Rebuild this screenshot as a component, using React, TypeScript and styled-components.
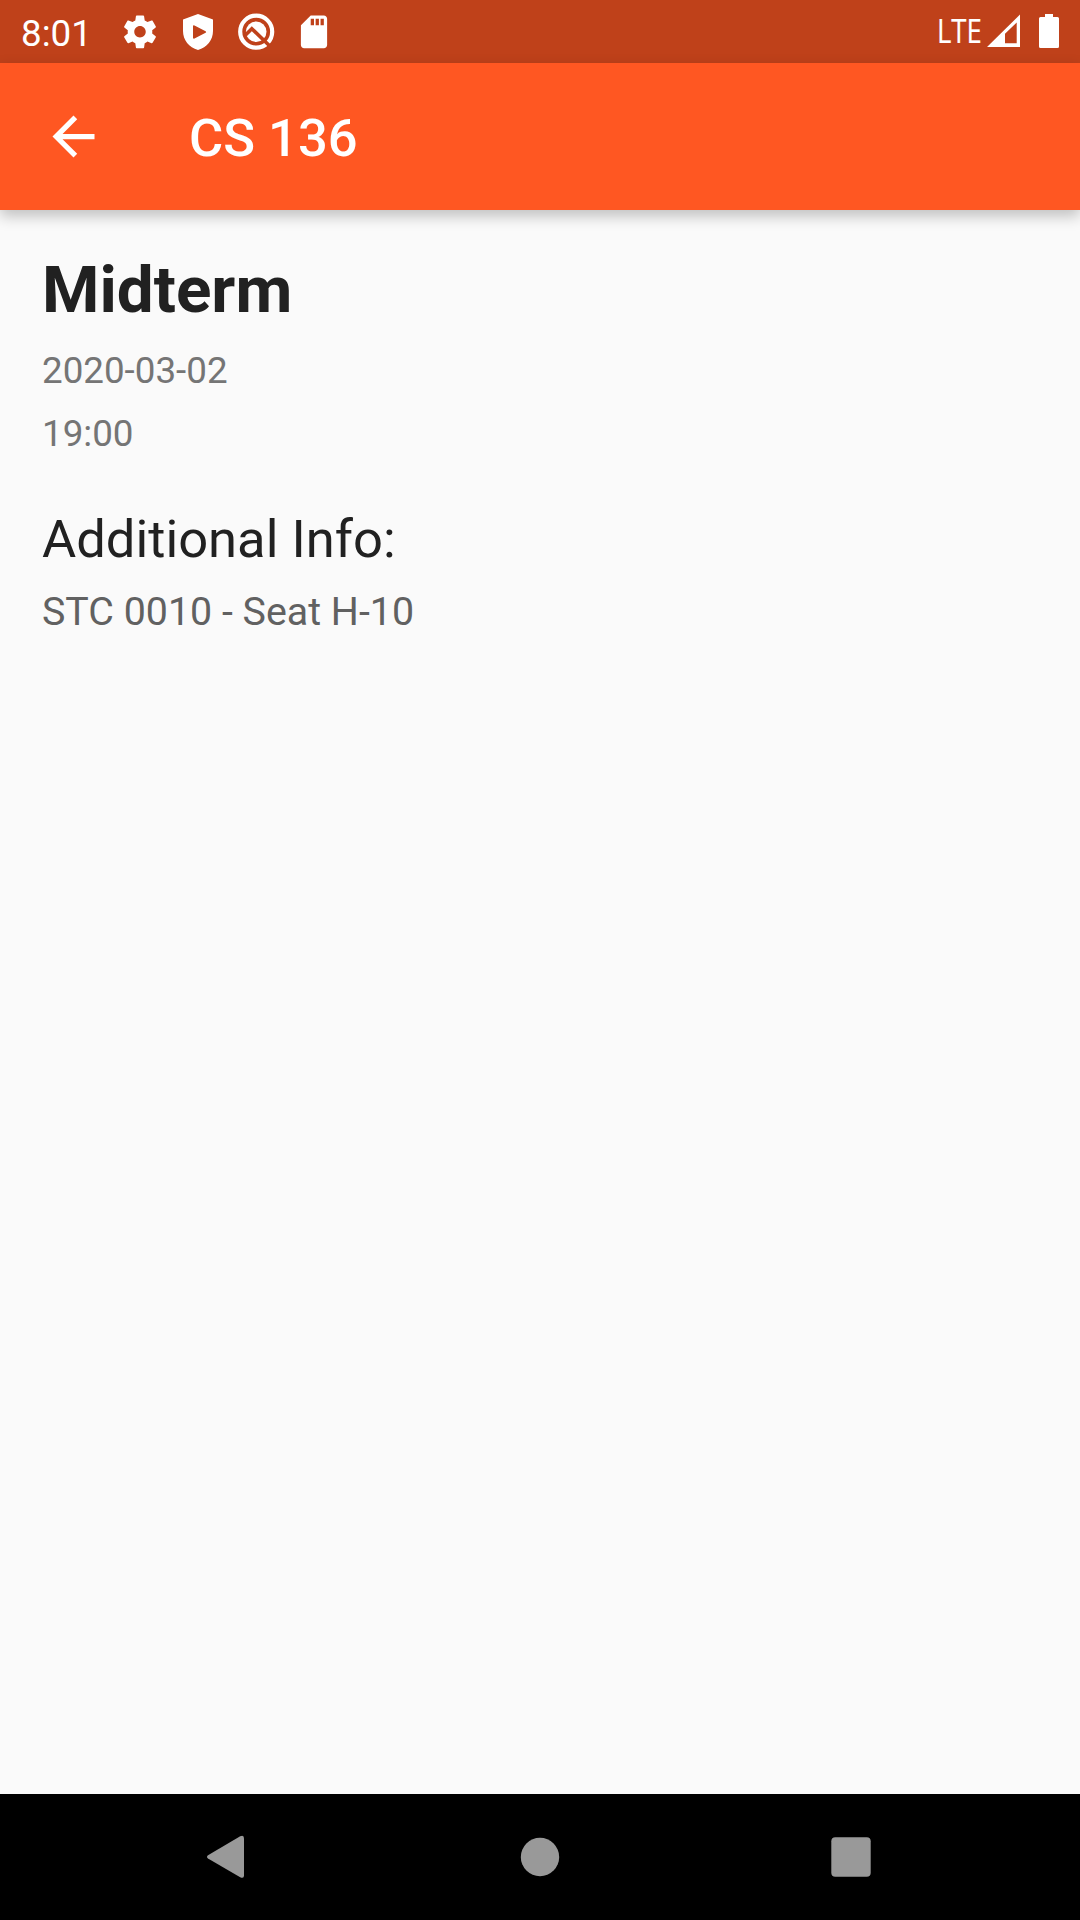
import React from "react";
import styled, { createGlobalStyle } from "styled-components";

const GlobalStyle = createGlobalStyle`
  * { box-sizing: border-box; }
  body { margin: 0; background: #fafafa; font-family: Roboto, sans-serif; }
`;

const Screen = styled.div`
  display: flex;
  flex-direction: column;
  width: 1080px;
  height: 1920px;
  background: #fafafa;
  overflow: hidden;
`;

const StatusBar = styled.div`
  display: flex;
  flex: none;
  align-items: center;
  justify-content: space-between;
  height: 63px;
  padding: 0 15px 0 21px;
  background: #bf411a;
  color: #fff;
`;

const StatusGroup = styled.div<{ $gap: number }>`
  display: flex;
  align-items: center;
  gap: ${(p) => p.$gap}px;
  height: 63px;
`;

const Clock = styled.span`
  width: 81px;
  padding-top: 3px;
  font-size: 36.75px;
  line-height: 63px;
  white-space: nowrap;
`;

const NetworkLabel = styled.span`
  display: block;
  width: 44px;
  padding-bottom: 2px;
  font-family: "Open Sans", sans-serif;
  font-size: 32px;
  line-height: 60px;
  white-space: nowrap;
  -webkit-text-stroke: 0.2px currentColor;
  transform: scaleX(0.86);
  transform-origin: left center;
`;

const Icon = styled.svg<{ $w: number; $h: number }>`
  display: block;
  flex: none;
  width: ${(p) => p.$w}px;
  height: ${(p) => p.$h}px;
  fill: currentColor;
`;

const AppBar = styled.header`
  display: flex;
  flex: none;
  align-items: center;
  gap: 84px;
  height: 147px;
  padding: 0 42px;
  background: #ff5722;
  color: #fff;
  box-shadow: 0 6px 14px rgba(0, 0, 0, 0.24);
`;

const BackButton = styled.button`
  display: block;
  padding: 0;
  border: 0;
  background: none;
  color: inherit;
`;

const BarTitle = styled.h1`
  margin: 0;
  padding-top: 3px;
  font-size: 52.5px;
  font-weight: 500;
  line-height: 62px;
`;

const Content = styled.main`
  display: flex;
  flex: 1;
  flex-direction: column;
  padding: 42px 42px 0;
`;

const Heading = styled.h2`
  margin: 0 0 21px;
  color: #212121;
  font-size: 65.625px;
  font-weight: 700;
  line-height: 76px;
`;

const Detail = styled.p`
  margin: 0 0 19px;
  color: #757575;
  font-size: 36.75px;
  line-height: 44px;
`;

const SectionTitle = styled.h3`
  margin: 33px 0 19px;
  color: #212121;
  font-size: 52.5px;
  font-weight: 400;
  line-height: 62px;
`;

const SectionText = styled.p`
  margin: 0;
  color: #616161;
  font-size: 39.375px;
  line-height: 46px;
`;

const NavBar = styled.nav`
  display: flex;
  flex: none;
  align-items: center;
  justify-content: space-between;
  height: 126px;
  padding: 0 209px 0 206px;
  background: #000;
  color: #999;
`;

export default function App() {
  return (
    <Screen>
      <GlobalStyle />
      <StatusBar>
        <StatusGroup $gap={18}>
          <Clock>8:01</Clock>
          <Icon $w={40} $h={40} viewBox="-0.2 -0.1 24.4 24.4">
            <path d="M19.43 12.98c.04-.32.07-.64.07-.98s-.03-.66-.07-.98l2.11-1.65c.19-.15.24-.42.12-.64l-2-3.46c-.12-.22-.39-.3-.61-.22l-2.49 1c-.52-.4-1.08-.73-1.69-.98l-.38-2.65C14.46 2.18 14.25 2 14 2h-4c-.25 0-.46.18-.49.42l-.38 2.65c-.61.25-1.17.59-1.69.98l-2.49-1c-.23-.09-.49 0-.61.22l-2 3.46c-.13.22-.07.49.12.64l2.11 1.65c-.04.32-.07.65-.07.98s.03.66.07.98l-2.11 1.65c-.19.15-.24.42-.12.64l2 3.46c.12.22.39.3.61.22l2.49-1c.52.4 1.08.73 1.69.98l.38 2.65c.03.24.24.42.49.42h4c.25 0 .46-.18.49-.42l.38-2.65c.61-.25 1.17-.59 1.69-.98l2.49 1c.23.09.49 0 .61-.22l2-3.46c.12-.22.07-.49-.12-.64l-2.11-1.65zM12 15.5c-1.93 0-3.5-1.57-3.5-3.5s1.57-3.5 3.5-3.5 3.5 1.57 3.5 3.5-1.57 3.5-3.5 3.5z" />
          </Icon>
          <Icon $w={40} $h={40} viewBox="0 0 40 40">
            <path
              fillRule="evenodd"
              d="M20 2 35 7.500V19C35 28 29 35.500 20 38 11 35.500 5 28 5 19V7.500ZM16.500 13.600Q15 12.800 15 14.500V25.500Q15 27.200 16.500 26.400L27.600 20.800Q28.900 20 27.600 19.200Z"
            />
          </Icon>
          <Icon $w={40} $h={40} viewBox="0 0 40 40">
            <circle cx="20.200" cy="19.700" r="16" fill="none" stroke="currentColor" strokeWidth="4.200" />
            <circle cx="20.200" cy="19.700" r="10.300" />
            <path d="M9 23.500 15.800 16.700 33.500 33.700" fill="none" stroke="#bf411a" strokeWidth="3.600" />
          </Icon>
          <Icon $w={40} $h={40} viewBox="-0.2 -0.1 24.4 24.4">
            <path d="M18 2h-8L4.020 8 4 20c0 1.100.9 2 2 2h12c1.100 0 2-.9 2-2V4c0-1.100-.9-2-2-2zm-6 6h-2V4h2v4zm3 0h-2V4h2v4zm3 0h-2V4h2v4z" />
          </Icon>
        </StatusGroup>
        <StatusGroup $gap={6}>
          <NetworkLabel>LTE</NetworkLabel>
          <Icon $w={33} $h={35} viewBox="987 14 33 35">
            <path fillRule="evenodd" d="M987 47 1020 14.500V47ZM1005 33.700V43.300H1016.700V22.500Z" />
          </Icon>
          <Icon $w={39} $h={41} viewBox="1026 11 39 41">
            <path d="M1045 14h8v3h4.500q1.500 0 1.500 1.500V46.500q0 1.500-1.500 1.500h-17q-1.500 0-1.500-1.500V18.500q0-1.500 1.500-1.500h4.500Z" />
          </Icon>
        </StatusGroup>
      </StatusBar>
      <AppBar>
        <BackButton aria-label="Back">
          <Icon $w={63} $h={63} viewBox="0 0 24 24">
            <path d="M20 11H7.830l5.590-5.590L12 4l-8 8 8 8 1.410-1.410L7.830 13H20v-2z" />
          </Icon>
        </BackButton>
        <BarTitle>CS 136</BarTitle>
      </AppBar>
      <Content>
        <Heading>Midterm</Heading>
        <Detail>2020-03-02</Detail>
        <Detail>19:00</Detail>
        <SectionTitle>Additional Info:</SectionTitle>
        <SectionText>STC 0010 - Seat H-10</SectionText>
      </Content>
      <NavBar>
        <Icon $w={38} $h={44} viewBox="206 1835 38 44">
          <path d="M240.200 1836.300Q244 1834.500 244 1838.500V1875.500Q244 1879 240.200 1877.200L208 1858.600Q206 1857 208 1855.300Z" />
        </Icon>
        <Icon $w={44} $h={40} viewBox="0 0 44 40">
          <circle cx="24" cy="20" r="19.200" />
        </Icon>
        <Icon $w={40} $h={40} viewBox="0 0 40 40">
          <rect x="0.300" y="0.300" width="39.400" height="39.400" rx="4" />
        </Icon>
      </NavBar>
    </Screen>
  );
}
